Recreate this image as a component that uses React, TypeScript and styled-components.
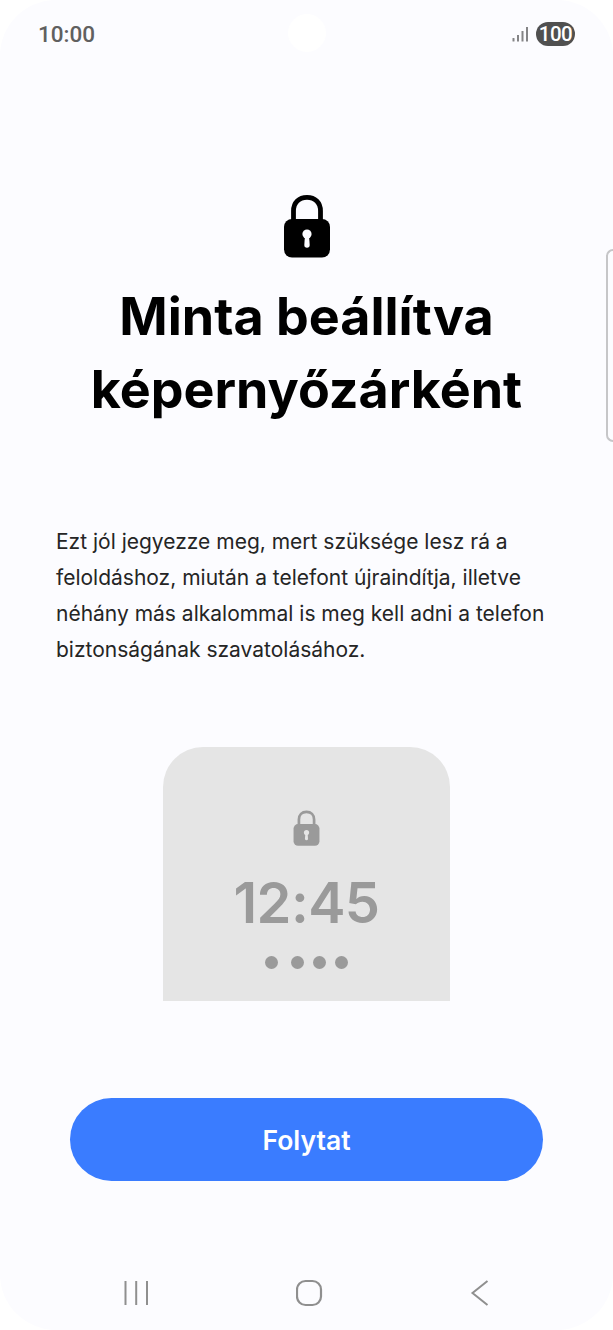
import styled, { createGlobalStyle } from "styled-components";

const GlobalStyle = createGlobalStyle`
  html, body {
    margin: 0;
    padding: 0;
    background: #fff;
  }
  * {
    box-sizing: border-box;
  }
`;

const LockIcon = ({ size, fill, hole }: { size: number; fill: string; hole: string }) => (
  <svg width={size} height={size * (64 / 48)} viewBox="0 0 48 64">
    <path
      d="M10.5 27V17C10.5 8.5 16 3.3 24 3.3S37.5 8.5 37.5 17V27"
      fill="none"
      stroke={fill}
      strokeWidth="4.8"
    />
    <rect x="1" y="25" width="46" height="38.5" rx="8" fill={fill} />
    <circle cx="24" cy="40" r="4.6" fill={hole} />
    <path d="M22 41h4l.7 10a2.7 2.7 0 0 1-5.4 0z" fill={hole} />
  </svg>
);

export default () => {
  return (
    <>
      <GlobalStyle />
      <Screen>
        <StatusBar>
          <Clock>10:00</Clock>
          <Camera />
          <StatusRight>
            <svg width="17" height="16" viewBox="0 0 17 16">
              <rect x="0.5" y="12" width="2" height="3.5" rx="0.6" fill="#848486" />
              <rect x="5" y="9" width="2" height="6.5" fill="#848486" />
              <rect x="9.5" y="5" width="2" height="10.5" fill="#848486" />
              <rect x="14" y="1" width="2" height="14.5" fill="#848486" />
            </svg>
            <Battery>100</Battery>
          </StatusRight>
        </StatusBar>

        <EdgeHandle />

        <Content>
          <LockIcon size={48} fill="#000" hole="#fcfcff" />
          <Title>
            Minta beállítva
            <br />
            képernyőzárként
          </Title>
          <Description>
            Ezt jól jegyezze meg, mert szüksége lesz rá a
            <br />
            feloldáshoz, miután a telefont újraindítja, illetve
            <br />
            néhány más alkalommal is meg kell adni a telefon
            <br />
            biztonságának szavatolásához.
          </Description>
          <Preview>
            <LockIcon size={27} fill="#9a9a9a" hole="#e5e5e5" />
            <PreviewTime>12:45</PreviewTime>
            <Dots>
              <Dot />
              <Dot />
              <Dot />
              <Dot />
            </Dots>
          </Preview>
          <ContinueButton>Folytat</ContinueButton>
        </Content>

        <NavBar>
          <svg width="26" height="26" viewBox="0 0 26 26">
            <path d="M2.5 1v24M13.2 1v24M24 1v24" stroke="#8f8f8f" strokeWidth="2" fill="none" />
          </svg>
          <svg width="28" height="28" viewBox="0 0 28 28">
            <rect x="1" y="2" width="24" height="24" rx="8.5" stroke="#8f8f8f" strokeWidth="2.2" fill="none" />
          </svg>
          <svg width="20" height="28" viewBox="0 0 20 28">
            <path d="M17.5 2 2.5 14l15 12" stroke="#8f8f8f" strokeWidth="2" fill="none" />
          </svg>
        </NavBar>
      </Screen>
    </>
  );
};

const Screen = styled.main`
  position: relative;
  width: 613px;
  height: 1330px;
  border-radius: 56px;
  background-color: #fcfcff;
  display: flex;
  flex-direction: column;
  overflow: hidden;
  font-family: "Inter", "Liberation Sans", sans-serif;
`;
const StatusBar = styled.header`
  height: 68px;
  padding: 0 38px;
  display: flex;
  align-items: center;
  justify-content: space-between;
`;
const Clock = styled.span`
  font-family: "Roboto", sans-serif;
  font-size: 22.5px;
  font-weight: 500;
  color: #606060;
`;
const Camera = styled.div`
  position: absolute;
  top: 14px;
  left: 50%;
  width: 38px;
  height: 38px;
  margin-left: -19px;
  border-radius: 50%;
  background-color: #fff;
`;
const StatusRight = styled.div`
  display: flex;
  align-items: center;
  gap: 7px;
`;
const Battery = styled.span`
  width: 39px;
  height: 24px;
  border-radius: 12px;
  background-color: #505050;
  color: #fff;
  font-family: "Roboto", sans-serif;
  font-size: 20.5px;
  font-weight: 500;
  letter-spacing: -0.5px;
  display: flex;
  align-items: center;
  justify-content: center;
`;
const EdgeHandle = styled.div`
  position: absolute;
  top: 249px;
  right: 0;
  width: 7px;
  height: 193px;
  border: 2px solid #c6c6c8;
  border-right: none;
  border-radius: 9px 0 0 9px;
`;
const Content = styled.div`
  flex: 1;
  display: flex;
  flex-direction: column;
  align-items: center;
  padding-top: 126px;
`;
const Title = styled.h1`
  margin: 22px 0 0;
  font-size: 52px;
  font-weight: 700;
  line-height: 73px;
  color: #000;
  text-align: center;
`;
const Description = styled.p`
  align-self: stretch;
  margin: 98px 0 0;
  padding: 0 56px;
  font-size: 21px;
  font-weight: 400;
  line-height: 36px;
  color: #252525;
`;
const Preview = styled.div`
  width: 287px;
  height: 254px;
  margin-top: 79px;
  padding-top: 63px;
  border-radius: 40px 40px 0 0;
  background-color: #e5e5e5;
  display: flex;
  flex-direction: column;
  align-items: center;
`;
const PreviewTime = styled.div`
  margin-top: 23px;
  font-size: 56px;
  font-weight: 600;
  line-height: 68px;
  letter-spacing: -0.6px;
  color: #9a9a9a;
`;
const Dots = styled.div`
  margin-top: 19px;
  display: flex;
  gap: 9px;
`;
const Dot = styled.span`
  width: 13px;
  height: 13px;
  border-radius: 50%;
  background-color: #9a9a9a;

  &:first-child {
    margin-right: 4px;
  }
`;
const ContinueButton = styled.button`
  width: 473px;
  height: 83px;
  margin-top: 97px;
  border: none;
  border-radius: 42px;
  background-color: #3a7cff;
  color: #fff;
  font-family: inherit;
  font-size: 26.5px;
  font-weight: 600;
`;
const NavBar = styled.nav`
  height: 88px;
  padding: 14px 123px 0;
  display: flex;
  align-items: center;
  justify-content: space-between;
`;
